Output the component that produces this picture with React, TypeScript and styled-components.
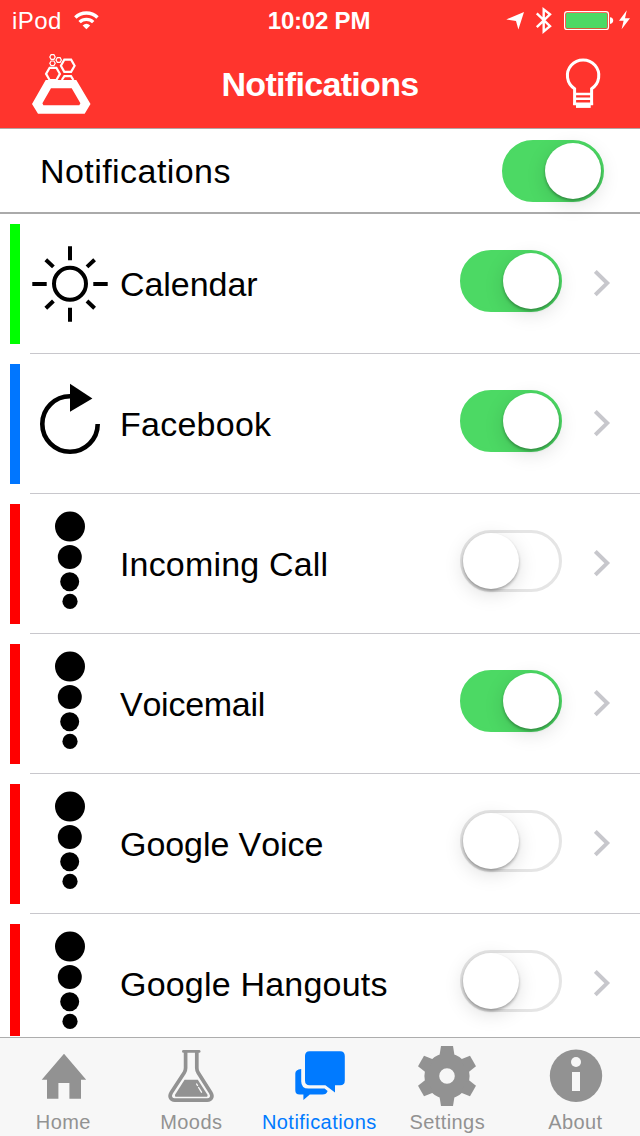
import React, { useState } from "react";
import styled, { createGlobalStyle } from "styled-components";

const GlobalStyle = createGlobalStyle`
  * { box-sizing: border-box; }
  body {
    margin: 0;
    background: #fff;
    font-family: "Liberation Sans", Arial, sans-serif;
    font-kerning: none;
    color: #000;
  }
  svg { display: block; flex: none; }
`;

const Screen = styled.div`
  display: flex;
  flex-direction: column;
  width: 640px;
  height: 1136px;
  overflow: hidden;
  background: #fff;
`;

const Header = styled.header`
  height: 129px;
  background: #ff342d;
  border-bottom: 1px solid #b2a5a5;
  color: #fff;
`;

const StatusBar = styled.div`
  display: grid;
  grid-template-columns: 1fr auto 1fr;
  height: 40px;
  align-items: center;
`;

const StatusSide = styled.div<{ $end?: boolean }>`
  display: flex;
  height: 40px;
  align-items: center;
  gap: 12px;
  justify-content: ${(p) => (p.$end ? "flex-end" : "flex-start")};
  padding: ${(p) => (p.$end ? "0" : "0 0 0 12px")};
`;

const StatusText = styled.span<{ $bold?: boolean; $spacing: number }>`
  font-size: 24px;
  line-height: 28px;
  padding-top: 1px;
  padding-right: ${(p) => (p.$bold ? 2 : 0)}px;
  font-weight: ${(p) => (p.$bold ? 700 : 400)};
  letter-spacing: ${(p) => p.$spacing}px;
`;

const NavBar = styled.div`
  display: grid;
  grid-template-columns: 120px 1fr 120px;
  height: 88px;
`;

const Title = styled.h1`
  margin: 0;
  padding-top: 25px;
  text-align: center;
  font-size: 34px;
  line-height: 39px;
  font-weight: 700;
  letter-spacing: -0.68px;
`;

const MasterRow = styled.div`
  display: flex;
  justify-content: space-between;
  height: 85px;
  padding: 11px 36px 0 39px;
  border-bottom: 2px solid #aaa;
`;

const Label = styled.span<{ $spacing: number }>`
  font-size: 34px;
  line-height: 39px;
  letter-spacing: ${(p) => p.$spacing}px;
  white-space: nowrap;
`;

const MasterLabel = styled(Label)`
  margin-top: 12px;
  padding-left: 1px;
`;

const List = styled.main`
  height: 822px;
  overflow: hidden;
`;

const Row = styled.div`
  display: flex;
  height: 140px;
  padding-left: 10px;
`;

const Accent = styled.div<{ $color: string }>`
  width: 10px;
  height: 120px;
  margin: 10px 10px 0 0;
  background: ${(p) => p.$color};
`;

const RowBody = styled.div`
  display: flex;
  flex: 1;
  border-bottom: 1px solid #c8c7cc;
`;

const RowLabel = styled(Label)`
  flex: 1;
  margin: 51px 0 0 10px;
`;

const RowSwitch = styled.div`
  padding-top: 36px;
  margin-right: 32px;
`;

const Track = styled.button<{ $on: boolean }>`
  display: flex;
  flex: none;
  width: 102px;
  height: 62px;
  padding: 0;
  align-items: center;
  justify-content: ${(p) => (p.$on ? "flex-end" : "flex-start")};
  border: 3px solid ${(p) => (p.$on ? "#4cd964" : "#e5e5e5")};
  border-radius: 31px;
  background: ${(p) => (p.$on ? "#4cd964" : "#fff")};
`;

const Knob = styled.span`
  width: 56px;
  height: 56px;
  border-radius: 50%;
  background: #fff;
  box-shadow: 0 2px 3px rgba(0, 0, 0, 0.3), 0 5px 20px rgba(0, 0, 0, 0.13);
`;

const TabBar = styled.nav`
  display: grid;
  grid-template-columns: repeat(5, 1fr);
  height: 99px;
  margin-top: 1px;
  border-top: 1px solid #adadad;
  background: #f7f7f7;
`;

const Tab = styled.div<{ $active?: boolean }>`
  display: flex;
  flex-direction: column;
  align-items: center;
  padding-top: 8px;
  color: ${(p) => (p.$active ? "#007aff" : "#929292")};
`;

const TabLabel = styled.span<{ $spacing: number }>`
  margin-top: 5px;
  padding-right: 1.4px;
  font-size: 20px;
  line-height: 23px;
  letter-spacing: ${(p) => p.$spacing}px;
`;

const WifiIcon = () => (
  <svg width="26" height="40" viewBox="74 0 26 40" fill="none" stroke="#fff" strokeWidth="3.4">
    <path d="M75.3 17.5A15.9 15.9 0 0 1 97.5 17.5" />
    <path d="M79.6 22.1A9.8 9.8 0 0 1 93.2 22.1" />
    <path d="M86.4 29.2L82.6 25.4Q86.4 21.9 90.2 25.4Z" fill="#fff" stroke="none" />
  </svg>
);

const StatusIcons = () => (
  <svg width="136" height="40" viewBox="504 0 136 40" fill="none">
    <path d="M524 12L518.4 29.4L516 20.9L506.3 19.4Z" fill="#fff" />
    <path d="M536.8 13.4L550 26.2L543.7 31.4V9.4L550 14.4L536.8 27.2" stroke="#fff" strokeWidth="2.4" />
    <rect x="564.6" y="11.6" width="43.9" height="17.9" rx="2.6" stroke="#fff" strokeWidth="1.2" />
    <rect x="566" y="13" width="41.2" height="15.2" rx="1.2" fill="#4cd964" />
    <path d="M610 17.2Q613.2 17.6 613.2 20.6T610 24Z" fill="#fff" />
    <path d="M626.8 10.2L619 20.8H623.6L621.6 29.3L630 18.3H625Z" fill="#fff" />
  </svg>
);

const BrandIcon = () => (
  <svg width="120" height="88" viewBox="0 40 120 88" fill="none" stroke="#fff">
    <path
      fill="#fff"
      stroke="none"
      fillRule="evenodd"
      d="M45.7 80H76.3L90.5 104L84.7 113.8H38L32 104ZM51 88.3L42.4 103.2L43.4 105.3H79.3L80.4 103.2L71.7 88.3Z"
    />
    <path strokeWidth="2.2" d="M60.9 65.7L64.3 59.6H71.1L74.6 65.7L71.1 71.8H64.3Z" />
    <path strokeWidth="2.2" d="M46.1 73.9L49.6 67.8H56.4L59.9 73.9L56.4 80H49.6Z" />
    <path strokeWidth="2.2" d="M61.8 80L64.4 76.1H71L73.4 80" />
    <g strokeWidth="1.2">
      <path d="M49.8 57L51.1 54.7H53.9L55.2 57L53.9 59.3H51.1Z" />
      <path d="M56 60L57.3 57.7H60.1L61.4 60L60.1 62.3H57.3Z" />
      <path d="M49.8 63.3L51.1 61H53.9L55.2 63.3L53.9 65.6H51.1Z" />
    </g>
  </svg>
);

const BulbIcon = () => (
  <svg width="120" height="88" viewBox="520 40 120 88" fill="none" stroke="#fff">
    <path strokeWidth="3" d="M574.6 105V88.8A15.7 15.7 0 1 1 591.6 88.8V105" />
    <path strokeWidth="2.6" d="M574 94H592.5M574 98.8H592.5M573.2 103.9H593.1" />
    <path strokeWidth="3.2" d="M576 106.3H590.7" />
  </svg>
);

const SunIcon = () => (
  <svg width="80" height="139" viewBox="30 0 80 139" fill="none" stroke="#000" strokeWidth="4">
    <circle cx="70" cy="69.8" r="16" />
    <path d="M70 32.3V46.3M70 93.7V107.7M32.3 70H46.7M93.3 70H107.7" />
    <path d="M45.8 45.8L53.4 52.9M94.6 45.8L87 52.9M45.8 94.3L53.4 87M94.6 94.3L87 87" />
  </svg>
);

const RefreshIcon = () => (
  <svg width="80" height="139" viewBox="30 0 80 139">
    <path d="M97.7 70A27.7 27.7 0 1 1 70 42.3" fill="none" stroke="#000" strokeWidth="4.6" />
    <path d="M70 29.7L92.4 44.6L70 57.8Z" />
  </svg>
);

const DotsIcon = () => (
  <svg width="80" height="139" viewBox="30 0 80 139">
    <circle cx="70" cy="32.6" r="15" />
    <circle cx="69.8" cy="63" r="12" />
    <circle cx="69.7" cy="87.7" r="9.5" />
    <circle cx="70" cy="107.4" r="7.6" />
  </svg>
);

const Chevron = () => (
  <svg width="46" height="139" viewBox="594 0 46 139" fill="none" stroke="#c7c7cc" strokeWidth="4">
    <path d="M595.3 57.4L607.2 69.1L595.3 80.8" />
  </svg>
);

const HomeIcon = () => (
  <svg width="60" height="60" viewBox="34 1046 60 60" fill="currentColor">
    <path d="M64 1053.7L86.2 1079.7H81V1098.8H69.4V1083H58.4V1098.8H47V1079.7H41.7Z" />
  </svg>
);

const FlaskIcon = () => (
  <svg width="60" height="60" viewBox="162 1046 60 60" fill="none" stroke="currentColor">
    <path strokeWidth="2.8" strokeLinecap="round" d="M183.4 1051.4H199.1" />
    <path
      strokeWidth="3.7"
      d="M185.6 1052V1068Q185.6 1070.5 184.2 1072.8L171.3 1092.4C168.7 1096.4 170.7 1100.2 174.8 1100.2H207.2C211.4 1100.2 213.3 1096.4 210.7 1092.4L198.2 1072.8Q196.8 1070.5 196.8 1068V1052"
    />
    <path
      fill="currentColor"
      stroke="none"
      d="M184.6 1079.8H197.8L207.3 1094.4Q208.2 1096.7 206 1096.7H176.4Q174.3 1096.7 175.2 1094.4Z"
    />
    <path stroke="#f7f7f7" strokeWidth="1.4" strokeLinecap="round" d="M196.6 1084L197.5 1085.5M198.6 1087.5L201.5 1092.2" />
  </svg>
);

const ChatIcon = () => (
  <svg width="60" height="60" viewBox="290 1046 60 60" fill="currentColor">
    <path d="M309.6 1051.3H340.2Q344.8 1051.3 344.8 1056V1080.4Q344.8 1085.2 340.2 1085.2H335V1092.6L325.4 1085.2H309.6Q305 1085.2 305 1080.4V1056Q305 1051.3 309.6 1051.3Z" />
    <path d="M301.2 1069V1081.2Q301.2 1088.6 308.5 1088.6H324.6L327.6 1091Q326.6 1094.6 322.4 1094.6H309.8L303.4 1100V1094.6H299.6Q295.3 1094.6 295.3 1090.2V1073.6Q295.3 1069.6 301.2 1069Z" />
  </svg>
);

const GearIcon = () => (
  <svg width="60" height="60" viewBox="-29 -30 60 60" fill="currentColor">
    <path
      fillRule="evenodd"
      d="M0 -22.6A22.6 22.6 0 1 1 0 22.6A22.6 22.6 0 1 1 0 -22.6ZM0 -7.8A7.8 7.8 0 1 0 0 7.8A7.8 7.8 0 1 0 0 -7.8Z"
    />
    {[0, 60, 120, 180, 240, 300].map((angle) => (
      <path key={angle} transform={`rotate(${angle})`} d="M-6 -30H6L7.6 -20H-7.6Z" />
    ))}
  </svg>
);

const InfoIcon = () => (
  <svg width="60" height="60" viewBox="546 1046 60 60">
    <circle cx="576" cy="1075.8" r="26.2" fill="currentColor" />
    <circle cx="576" cy="1062" r="5" fill="#f7f7f7" />
    <rect x="572" y="1072" width="8" height="19" fill="#f7f7f7" />
  </svg>
);

interface Item {
  name: string;
  color: string;
  icon: React.ComponentType;
  on: boolean;
  spacing: number;
}

const initialItems: Item[] = [
  { name: "Calendar", color: "#00ff00", icon: SunIcon, on: true, spacing: -0.06 },
  { name: "Facebook", color: "#0076ff", icon: RefreshIcon, on: true, spacing: 0.25 },
  { name: "Incoming Call", color: "#ff0000", icon: DotsIcon, on: false, spacing: 0.17 },
  { name: "Voicemail", color: "#ff0000", icon: DotsIcon, on: true, spacing: -0.25 },
  { name: "Google Voice", color: "#ff0000", icon: DotsIcon, on: false, spacing: -0.07 },
  { name: "Google Hangouts", color: "#ff0000", icon: DotsIcon, on: false, spacing: 0.2 },
];

const tabs = [
  { name: "Home", icon: HomeIcon, spacing: 0.4 },
  { name: "Moods", icon: FlaskIcon, spacing: 0.4 },
  { name: "Notifications", icon: ChatIcon, active: true, spacing: 0.45 },
  { name: "Settings", icon: GearIcon, spacing: 0.4 },
  { name: "About", icon: InfoIcon, spacing: 0.4 },
];

function Switch({ on, label, onToggle }: { on: boolean; label: string; onToggle: () => void }) {
  return (
    <Track type="button" role="switch" aria-checked={on} aria-label={label} $on={on} onClick={onToggle}>
      <Knob />
    </Track>
  );
}

export default function App() {
  const [enabled, setEnabled] = useState(true);
  const [items, setItems] = useState(initialItems);
  const toggle = (index: number) =>
    setItems((list) => list.map((item, i) => (i === index ? { ...item, on: !item.on } : item)));

  return (
    <>
      <GlobalStyle />
      <Screen>
        <Header>
          <StatusBar>
            <StatusSide>
              <StatusText $spacing={0.4}>iPod</StatusText>
              <WifiIcon />
            </StatusSide>
            <StatusText $bold $spacing={-0.2}>10:02 PM</StatusText>
            <StatusSide $end>
              <StatusIcons />
            </StatusSide>
          </StatusBar>
          <NavBar>
            <BrandIcon />
            <Title>Notifications</Title>
            <BulbIcon />
          </NavBar>
        </Header>
        <MasterRow>
          <MasterLabel $spacing={0.44}>Notifications</MasterLabel>
          <Switch on={enabled} label="Notifications" onToggle={() => setEnabled(!enabled)} />
        </MasterRow>
        <List>
          {items.map(({ name, color, icon: Icon, on, spacing }, index) => (
            <Row key={name}>
              <Accent $color={color} />
              <RowBody>
                <Icon />
                <RowLabel $spacing={spacing}>{name}</RowLabel>
                <RowSwitch>
                  <Switch on={on} label={name} onToggle={() => toggle(index)} />
                </RowSwitch>
                <Chevron />
              </RowBody>
            </Row>
          ))}
        </List>
        <TabBar>
          {tabs.map(({ name, icon: Icon, active, spacing }) => (
            <Tab key={name} $active={active}>
              <Icon />
              <TabLabel $spacing={spacing}>{name}</TabLabel>
            </Tab>
          ))}
        </TabBar>
      </Screen>
    </>
  );
}
